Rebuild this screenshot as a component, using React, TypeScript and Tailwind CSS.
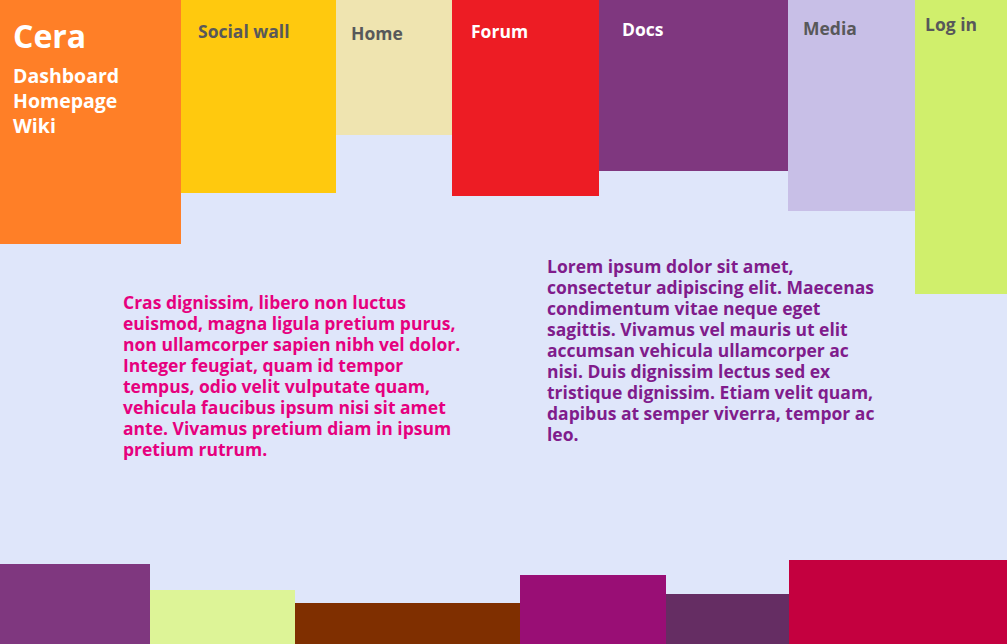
const font = { fontFamily: '"Open Sans", "Noto Sans", sans-serif' };

function NavBlock({
  label,
  className,
  textClass,
}: {
  label: string;
  className: string;
  textClass: string;
}) {
  return (
    <div className={`shrink-0 ${className}`}>
      <span className={`block font-bold text-[17.5px] leading-none ${textClass}`}>{label}</span>
    </div>
  );
}

export default function App() {
  return (
    <div className="flex h-[644px] w-[1007px] flex-col overflow-hidden bg-[#dfe6fa]" style={font}>
      {/* top nav */}
      <div className="flex h-[244px] items-start">
        <div className="h-[244px] w-[181px] shrink-0 bg-[#ff7f27] pl-[13px] pt-[16px] text-white">
          <div className="text-[32px] font-bold leading-[40px]">Cera</div>
          <div className="mt-[7px] flex flex-col text-[19.5px] font-bold leading-[25px]">
            <a>Dashboard</a>
            <a>Homepage</a>
            <a>Wiki</a>
          </div>
        </div>
        <NavBlock
          label="Social wall"
          className="h-[193px] w-[155px] bg-[#ffc90e] pl-[17px] pt-[23px]"
          textClass="text-[#58585a]"
        />
        <NavBlock
          label="Home"
          className="h-[135px] w-[116px] bg-[#efe4b0] pl-[15px] pt-[25px]"
          textClass="text-[#58585a]"
        />
        <NavBlock
          label="Forum"
          className="h-[196px] w-[147px] bg-[#ed1c24] pl-[19px] pt-[23px]"
          textClass="text-white"
        />
        <NavBlock
          label="Docs"
          className="h-[171px] w-[189px] bg-[#7f377f] pl-[23px] pt-[21px]"
          textClass="text-white"
        />
        <NavBlock
          label="Media"
          className="h-[211px] w-[127px] bg-[#c8bfe7] pl-[15px] pt-[20px]"
          textClass="text-[#58585a]"
        />
        <NavBlock
          label="Log in"
          className="h-[294px] w-[92px] bg-[#d0ef6c] pl-[10px] pt-[16px]"
          textClass="text-[#58585a]"
        />
      </div>

      {/* content */}
      <div className="flex items-start">
        <p className="ml-[123px] mt-[48px] w-[356px] text-[17.5px] font-bold leading-[21px] text-[#e6007e]">
          Cras dignissim, libero non luctus euismod, magna ligula pretium purus, non ullamcorper sapien
          nibh vel dolor. Integer feugiat, quam id tempor tempus, odio velit vulputate quam, vehicula
          faucibus ipsum nisi sit amet ante. Vivamus pretium diam in ipsum pretium rutrum.
        </p>
        <p className="ml-[68px] mt-[12px] w-[338px] text-[17.5px] font-bold leading-[21px] text-[#801c8c]">
          Lorem ipsum dolor sit amet, consectetur adipiscing elit. Maecenas condimentum vitae neque eget
          sagittis. Vivamus vel mauris ut elit accumsan vehicula ullamcorper ac nisi. Duis dignissim
          lectus sed ex tristique dignissim. Etiam velit quam, dapibus at semper viverra, tempor ac leo.
        </p>
      </div>

      {/* footer blocks */}
      <div className="mt-auto flex items-end">
        <div className="h-[80px] w-[150px] bg-[#7f377f]" />
        <div className="h-[54px] w-[145px] bg-[#ddf497]" />
        <div className="h-[41px] w-[225px] bg-[#7f2f00]" />
        <div className="h-[69px] w-[146px] bg-[#990e75]" />
        <div className="h-[50px] w-[123px] bg-[#652d63]" />
        <div className="h-[84px] w-[218px] bg-[#c4003f]" />
      </div>
    </div>
  );
}
